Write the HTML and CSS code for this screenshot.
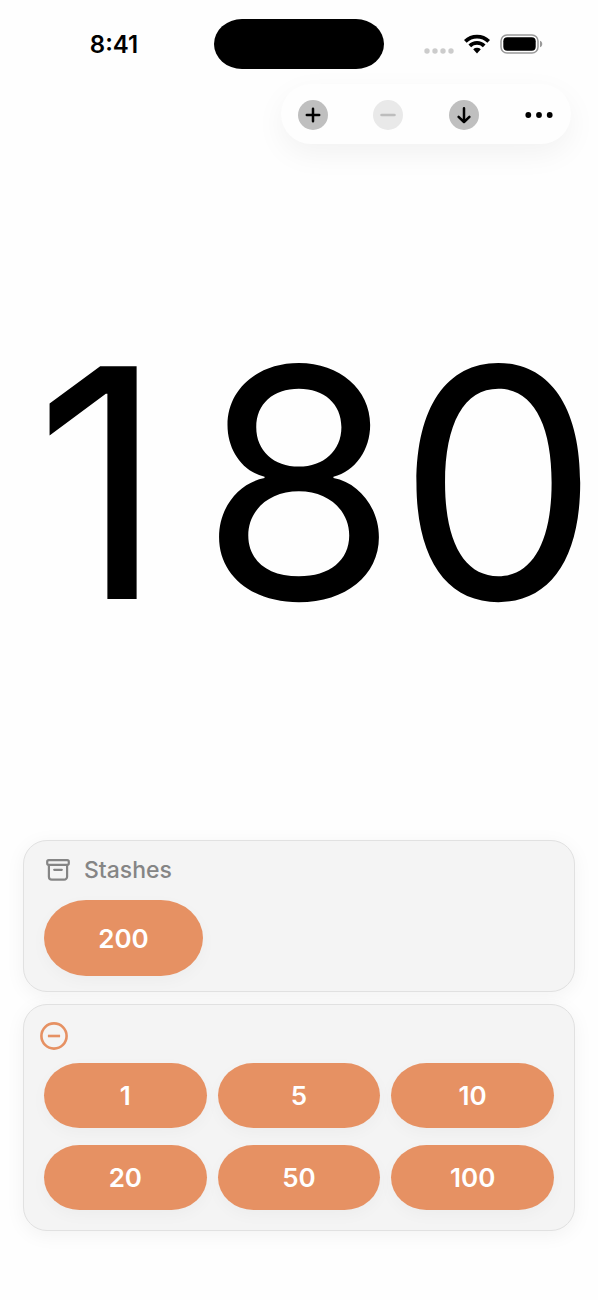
FILE: index.html
```html
<!DOCTYPE html>
<html lang="en">
<head>
<meta charset="utf-8">
<meta name="viewport" content="width=device-width, initial-scale=1">
<title>Counter</title>
<link rel="stylesheet" href="styles.css">
</head>
<body>
<div class="screen">
  <header class="status">
    <time class="clock">8:41</time>
    <div class="island"></div>
    <div class="indicators">
      <svg class="signal" viewBox="0 0 30 6" aria-hidden="true"><circle cx="3" cy="3" r="2.7"/><circle cx="11" cy="3" r="2.7"/><circle cx="19" cy="3" r="2.7"/><circle cx="27" cy="3" r="2.7"/></svg>
      <svg class="wifi" viewBox="0 0 26 20" aria-hidden="true"><path d="M1.3 7.4a16.6 16.6 0 0 1 23.4 0M5.8 11.8a10.2 10.2 0 0 1 14.4 0"/><path class="wifi-dot" d="M9.2 15.3a5.6 5.6 0 0 1 7.6 0L13 19.4z"/></svg>
      <svg class="battery" viewBox="0 0 43 20" aria-hidden="true"><rect class="shell" x="1" y="1" width="37" height="18" rx="6"/><rect x="3.3" y="3.3" width="32.4" height="13.4" rx="4"/><path class="cap" d="M40 6.7c3 1 3 5.6 0 6.6z"/></svg>
    </div>
  </header>
  <nav class="toolbar" aria-label="Counter actions">
    <button class="tool" type="button" aria-label="Add"><svg viewBox="0 0 30 30"><circle class="disc" cx="15" cy="15" r="15"/><path d="M15 8.8v12.4M8.8 15h12.4"/></svg></button>
    <button class="tool" type="button" aria-label="Remove" disabled><svg viewBox="0 0 30 30"><circle class="disc" cx="15" cy="15" r="15"/><path d="M8.5 15h13"/></svg></button>
    <button class="tool" type="button" aria-label="Stash"><svg viewBox="0 0 30 30"><circle class="disc" cx="15" cy="15" r="15"/><path d="M15 8.3v13.4M9.6 16.8l5.4 5.2 5.4-5.2"/></svg></button>
    <button class="tool" type="button" aria-label="More"><svg viewBox="0 0 30 30"><circle cx="4.3" cy="15" r="2.9"/><circle cx="15" cy="15" r="2.9"/><circle cx="25.7" cy="15" r="2.9"/></svg></button>
  </nav>
  <main class="total"><output class="digits"><span>1</span><span>8</span><span>0</span></output></main>
  <div class="cards">
    <section class="card">
      <h2 class="title">
        <svg class="archive" viewBox="0 0 24 22" aria-hidden="true"><rect x="1.2" y="1.2" width="21.6" height="4.6" rx="1.5"/><path d="M2.9 6v11.7a3 3 0 0 0 3 3h12.2a3 3 0 0 0 3-3V6M8.2 10.8h7.6"/></svg>
        Stashes
      </h2>
      <button class="pill stash" type="button">200</button>
    </section>
    <section class="card amounts" aria-label="Subtract">
      <button class="toggle" type="button" aria-label="Subtract mode"><svg viewBox="0 0 28 28"><circle cx="14" cy="14" r="12.6"/><path d="M7.9 14h12.2"/></svg></button>
      <div class="grid">
        <button class="pill" type="button">1</button>
        <button class="pill" type="button">5</button>
        <button class="pill" type="button">10</button>
        <button class="pill" type="button">20</button>
        <button class="pill" type="button">50</button>
        <button class="pill" type="button">100</button>
      </div>
    </section>
  </div>
</div>
</body>
</html>
```
FILE: styles.css
```css
* { box-sizing: border-box; }

body {
  margin: 0;
  background: #fefefe;
  color: #000;
  font-family: Inter, "Liberation Sans", sans-serif;
}

button {
  margin: 0;
  padding: 0;
  border: 0;
  background: none;
  font: inherit;
}

svg { display: block; }

.screen {
  display: flex;
  flex-direction: column;
  min-height: 100vh;
  padding: 19px 0 69px;
}

.status {
  display: grid;
  grid-template-columns: 1fr 170px 1fr;
  align-items: center;
  padding: 0 14px;
}

.clock {
  padding-top: 2px;
  text-align: center;
  font-size: 24px;
  line-height: 28px;
  font-weight: 600;
}

.island {
  height: 50px;
  border-radius: 28px / 25px;
  background: #000;
}

.indicators {
  display: flex;
  justify-content: center;
  align-items: center;
  gap: 10px;
  padding-right: 2px;
}

.signal { width: 30px; height: 6px; margin-top: 13px; fill: #ccc; }
.wifi { width: 26px; height: 20px; fill: none; stroke: #000; stroke-width: 3.8; }
.wifi-dot { fill: #000; stroke: none; }
.battery { width: 43px; height: 20px; }
.shell { fill: none; stroke: #999; stroke-width: 1.5; }
.cap { fill: #999; }

.toolbar {
  display: flex;
  justify-content: space-between;
  align-items: center;
  align-self: flex-end;
  width: 290px;
  height: 60px;
  margin: 15px 27px 0 0;
  padding: 1px 17px 0;
  border-radius: 30px;
  background: #fefefe;
  box-shadow: 0 10px 30px rgba(0, 0, 0, 0.05);
}

.tool svg {
  width: 30px;
  height: 30px;
  stroke-linecap: round;
  stroke-linejoin: round;
}
.tool path { fill: none; stroke: #000; stroke-width: 2.5; }
.tool .disc { fill: #bfbfbf; }
.tool:disabled .disc { fill: #e9e9e9; }
.tool:disabled path { stroke: #bdbdbd; }

.total {
  display: flex;
  flex: 1;
  align-items: center;
  padding-bottom: 18px;
}

.digits {
  display: grid;
  flex: 1;
  grid-template-columns: repeat(3, minmax(0, 1fr));
  justify-items: center;
  font-size: 320px;
  line-height: 380px;
}

.cards {
  display: flex;
  flex-direction: column;
  gap: 12px;
  padding: 0 23px;
}

.card {
  padding: 15px 20px;
  border: 1px solid #e1e1e1;
  border-radius: 24px;
  background: #f4f4f4;
  box-shadow: 0 4px 20px rgba(0, 0, 0, 0.05);
}

.title {
  display: flex;
  align-items: center;
  gap: 14px;
  margin: 0 0 16px 2px;
  color: #858585;
  font-size: 23px;
  line-height: 28px;
  font-weight: 500;
}

.archive {
  width: 24px;
  height: 22px;
  fill: none;
  stroke: #858585;
  stroke-width: 2.2;
  stroke-linecap: round;
}

.pill {
  height: 65px;
  padding-top: 1px;
  border-radius: 36px / 33px;
  background: #e69163;
  color: #fff;
  font-size: 26px;
  line-height: 32px;
  font-weight: 600;
  box-shadow: 0 5px 16px rgba(0, 0, 0, 0.03);
}

.stash {
  display: block;
  width: 159px;
  height: 76px;
  border-radius: 42px / 38px;
}

.amounts { padding: 17px 20px 20px; }

.toggle {
  display: block;
  margin: 0 0 13px -4px;
}
.toggle svg {
  width: 28px;
  height: 28px;
  fill: none;
  stroke: #e69163;
  stroke-width: 2.6;
}

.grid {
  display: grid;
  grid-template-columns: repeat(3, 1fr);
  gap: 17px 11px;
}
```
